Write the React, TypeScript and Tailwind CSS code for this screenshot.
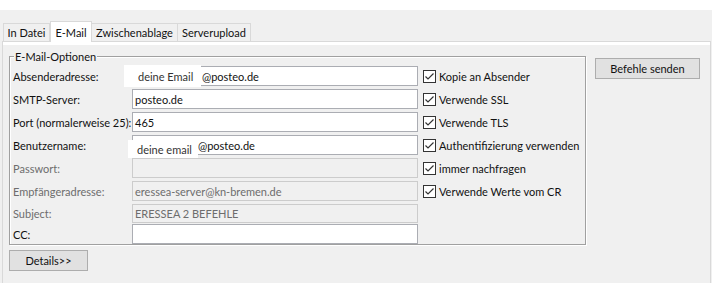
import React from "react";

const font = { fontFamily: 'Lato, "Liberation Sans", sans-serif' };

function Check() {
  return (
    <span className="w-[13px] h-[13px] border border-[#333333] bg-white flex items-center justify-center shrink-0">
      <svg width="11" height="11" viewBox="0 0 11 11">
        <path d="M1.5 5.5 L4 8 L9.5 2.5" fill="none" stroke="#333333" strokeWidth="1.2" />
      </svg>
    </span>
  );
}

type Row = {
  label: string;
  value?: string;
  disabled?: boolean;
  h: string;
  overlay?: "email" | "user";
  check?: string;
};

const rows: Row[] = [
  { label: "Absenderadresse:", value: "@posteo.de", h: "h-[20px]", overlay: "email", check: "Kopie an Absender" },
  { label: "SMTP-Server:", value: "posteo.de", h: "h-[20px]", check: "Verwende SSL" },
  { label: "Port (normalerweise 25):", value: "465", h: "h-[20px]", check: "Verwende TLS" },
  { label: "Benutzername:", value: "@posteo.de", h: "h-[20px]", overlay: "user", check: "Authentifizierung verwenden" },
  { label: "Passwort:", value: "", disabled: true, h: "h-[20px]", check: "immer nachfragen" },
  { label: "Empfängeradresse:", value: "eressea-server@kn-bremen.de", disabled: true, h: "h-[20px]", check: "Verwende Werte vom CR" },
  { label: "Subject:", value: "ERESSEA 2 BEFEHLE", disabled: true, h: "h-[19px]" },
  { label: "CC:", value: "", h: "h-[20px]" },
];

export default function App() {
  return (
    <div className="w-[712px] h-[283px] bg-[#f0f0f0] overflow-hidden text-[11px] text-[#111111] leading-none whitespace-nowrap" style={font}>
      <div className="h-[10px] bg-white" />
      {/* tabs */}
      <div className="flex items-end pl-[3px] h-[31px]">
        <div className="w-[47px] h-[18px] border border-b-0 border-[#d9d9d9] bg-[#f0f0f0] flex items-center justify-center">In Datei</div>
        <div className="w-[42px] h-[21px] border border-b-0 border-[#d9d9d9] bg-white flex items-center justify-center mb-[-1px] relative z-10">E-Mail</div>
        <div className="w-[86px] h-[18px] border border-b-0 border-l-0 border-[#d9d9d9] bg-[#f0f0f0] flex items-center justify-center">Zwischenablage</div>
        <div className="w-[73px] h-[18px] border border-b-0 border-l-0 border-[#d9d9d9] bg-[#f0f0f0] flex items-center justify-center">Serverupload</div>
      </div>
      {/* panel */}
      <div className="ml-[2px] w-[709px] h-[260px] border border-b-0 border-[#d9d9d9] bg-[#f0f0f0]">
        <div className="h-[3px] bg-white" />
        <div className="flex pl-[6px] pt-[5px]">
          <div className="flex flex-col">
            {/* groupbox */}
            <div className="relative w-[577px] h-[189px] mt-[6px] border border-[#a0a0a0] shadow-[1px_1px_0_#ffffff,inset_1px_1px_0_#ffffff]">
              <div className="absolute left-[4px] top-[-8px] px-[1px] bg-[#f0f0f0] h-[14px] flex items-center">E-Mail-Optionen</div>
              <div className="flex pl-[3px] pt-[9px]">
                <div className="flex flex-col">
                  {rows.map((r, i) => (
                    <div key={i} className={`flex items-stretch ${r.h} ${i === 0 ? "" : i === 7 ? "mt-[1px]" : "mt-[3px]"}`}>
                      <div className={`w-[119px] flex items-center ${r.disabled ? "text-[#6d6d6d]" : ""}`}>{r.label}</div>
                      <div
                        className={`relative w-[286px] border flex items-center pl-[2px] ${
                          r.disabled ? "bg-[#f0f0f0] border-[#cccccc] text-[#6d6d6d]" : "bg-white border-[#abadb3]"
                        }`}
                      >
                        {r.overlay === "email" ? <span className="pl-[67px]">{r.value}</span> : r.overlay === "user" ? <span className="pl-[63px]">{r.value}</span> : r.value}
                        {r.overlay === "email" && (
                          <div className="absolute left-[-9px] top-[-2px] w-[77px] h-[22px] bg-white flex items-center pl-[14px] text-[#333333]">deine Email</div>
                        )}
                        {r.overlay === "user" && (
                          <div className="absolute left-[-5px] top-[4px] w-[70px] h-[18px] bg-white flex items-center pl-[9px] text-[#333333]">deine email</div>
                        )}
                      </div>
                      <div className="ml-[5px] flex items-center gap-[3px]">
                        {r.check && (
                          <>
                            <Check />
                            <span>{r.check}</span>
                          </>
                        )}
                      </div>
                    </div>
                  ))}
                </div>
              </div>
            </div>
            <button className="mt-[5px] w-[79px] h-[21px] border border-[#adadad] bg-[#e1e1e1] flex items-center justify-center text-[11px]" style={font}>
              Details&gt;&gt;
            </button>
          </div>
          <div className="ml-[9px] mt-[8px]">
            <button className="w-[105px] h-[21px] border border-[#adadad] bg-[#e1e1e1] flex items-center justify-center text-[11px]" style={font}>
              Befehle senden
            </button>
          </div>
        </div>
      </div>
    </div>
  );
}
